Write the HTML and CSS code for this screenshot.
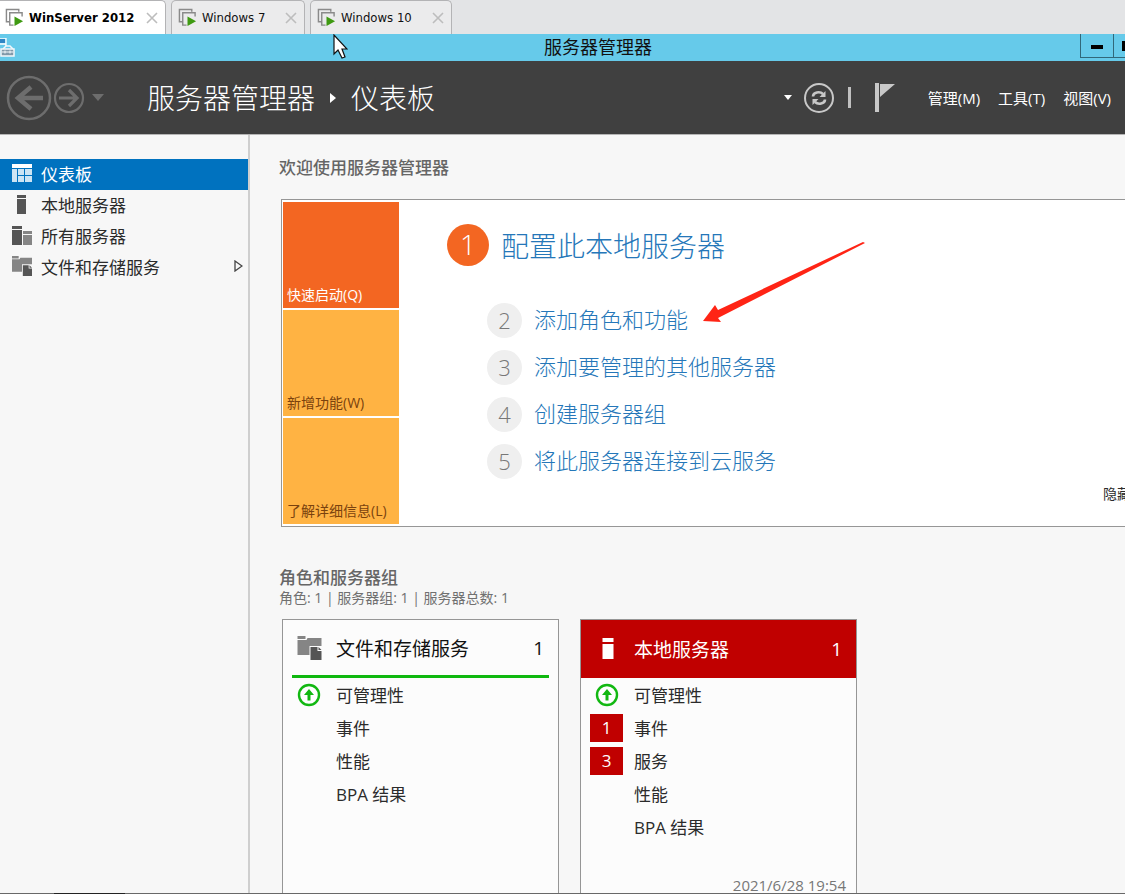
FILE: index.html
```html
<!DOCTYPE html>
<html lang="zh-CN">
<head>
<meta charset="utf-8">
<title>服务器管理器</title>
<link rel="stylesheet" href="styles.css">
</head>
<body>
<svg class="defs" aria-hidden="true">
  <symbol id="vm" viewBox="0 0 20 20">
    <path d="M5 14.500H1.500V1.500H14.500V4" fill="none" stroke="#8a8a8a" stroke-width="1.500"/>
    <path d="M9 18H5V5H18V9" fill="none" stroke="#8a8a8a" stroke-width="1.500"/>
    <path d="M10 9L19 14L10 19Z" fill="#3f9a12"/>
  </symbol>
  <symbol id="close" viewBox="0 0 12 12">
    <path d="M1 1L11 11M11 1L1 11" fill="none" stroke="#bdbdbd" stroke-width="1.600"/>
  </symbol>
  <symbol id="files" viewBox="0 0 24 24">
    <path d="M0 0H8V3H0ZM0 4H9L10 2H24V10H12V19H0Z" fill="#858585"/>
    <path d="M13 11H20V15H24V24H13Z" fill="#555"/>
    <path d="M21 11L24 14H21Z" fill="#555"/>
  </symbol>
  <symbol id="up" viewBox="0 0 24 24">
    <circle cx="12" cy="12" r="10" fill="#fff" stroke="#12b812" stroke-width="2.400"/>
    <path d="M12 6L17 12H13.500V17.500H10.500V12H7Z" fill="#12b812"/>
  </symbol>
</svg>
<div class="screen">
  <nav class="tabs" aria-label="虚拟机">
    <div class="tab tab-active"><svg class="vm"><use href="#vm"/></svg><span>WinServer 2012</span><button class="tab-close" aria-label="关闭"><svg><use href="#close"/></svg></button></div>
    <div class="tab tab-seven"><svg class="vm"><use href="#vm"/></svg><span>Windows 7</span><button class="tab-close" aria-label="关闭"><svg><use href="#close"/></svg></button></div>
    <div class="tab tab-ten"><svg class="vm"><use href="#vm"/></svg><span>Windows 10</span><button class="tab-close" aria-label="关闭"><svg><use href="#close"/></svg></button></div>
  </nav>
  <div class="window">
    <div class="titlebar">
      <svg class="app-icon" viewBox="0 0 16 20">
        <path d="M0 1H5V5H0Z" fill="#2f86c4"/><path d="M0 0H6V8M0 6H6" fill="none" stroke="#fff" stroke-width="1.300"/>
        <path d="M3 11L6 8H10L13 11" fill="none" stroke="#f4f8fb" stroke-width="1.500"/>
        <rect x="1" y="11" width="13" height="7" fill="#8199aa" stroke="#f4f8fb" stroke-width="1.500"/>
        <path d="M2 14H13M5 12.500V15.500M10 12.500V15.500" stroke="#f4f8fb"/>
      </svg>
      <h1>服务器管理器</h1>
      <div class="controls">
        <button aria-label="最小化"><svg viewBox="0 0 12 12"><path d="M0 5H12V9H0Z"/></svg></button>
        <button aria-label="最大化"><svg class="maximize" viewBox="0 0 16 12"><path d="M0 1H16V11H0ZM3 4V9H13V4Z" fill-rule="evenodd"/></svg></button>
      </div>
    </div>
    <header class="header">
      <button class="nav-button" aria-label="后退"><svg width="46" height="46" viewBox="0 0 46 46" fill="none" stroke="#6d6d6d"><circle cx="23" cy="23" r="21" stroke-width="2.500"/><path d="M37 23H12M25 12L12 23L25 34" stroke-width="4.500"/></svg></button>
      <button class="nav-button forward" aria-label="前进"><svg width="32" height="32" viewBox="0 0 32 32" fill="none" stroke="#6d6d6d"><circle cx="16" cy="16" r="14" stroke-width="2.200"/><path d="M6 16H24M16 8L24 16L16 24" stroke-width="3.200"/></svg></button>
      <svg class="history" viewBox="0 0 12 7"><path d="M0 0H12L6 7Z" fill="#6d6d6d"/></svg>
      <div class="crumbs"><span>服务器管理器</span><svg viewBox="0 0 6 10"><path d="M0 0L6 5L0 10Z" fill="#fff"/></svg><span>仪表板</span></div>
      <div class="tools">
        <svg width="8" height="5" viewBox="0 0 8 5"><path d="M0 0H8L4 5Z" fill="#fff"/></svg>
        <button class="nav-button refresh" aria-label="刷新"><svg width="32" height="32" viewBox="0 0 32 32" fill="none" stroke="#c8c8c8"><circle cx="16" cy="16" r="14" stroke-width="2"/><path d="M10 14.500C10 10 17 9 20 12M22 17.500C22 22 15 23 12 20" stroke-width="2.600"/><path d="M22.500 9V15H16.500ZM9.500 23V17H15.500Z" fill="#c8c8c8" stroke="none"/></svg></button>
        <span class="divider"></span>
        <button class="nav-button flag" aria-label="通知"><svg width="20" height="30" viewBox="0 0 20 30" fill="#c8c8c8"><path d="M0 0H4V29H0ZM5 1H20L5 14Z"/></svg></button>
        <div class="menu"><button>管理(M)</button><button>工具(T)</button><button>视图(V)</button></div>
      </div>
    </header>
    <div class="body">
      <nav class="sidebar">
        <a href="#" class="selected"><svg viewBox="0 0 20 20"><path d="M0 1H20V5H0Z" fill="#fff"/><path d="M0 6H5V19H0ZM6 6H12V12H6ZM13 6H20V12H13ZM6 13H12V19H6ZM13 13H20V19H13Z" fill="#cce4f4"/></svg><span>仪表板</span></a>
        <a href="#"><svg viewBox="0 0 20 20"><path d="M5 1H14V4H5ZM5 5H14V20H5Z" fill="#555"/></svg><span>本地服务器</span></a>
        <a href="#"><svg viewBox="0 0 20 20"><path d="M0 1H10V4H0ZM0 5H10V20H0Z" fill="#555"/><path d="M11 6H20V9H11ZM11 10H20V20H11Z" fill="#858585"/></svg><span>所有服务器</span></a>
        <a href="#"><svg viewBox="0 0 24 24"><use href="#files"/></svg><span>文件和存储服务</span><svg class="expand" viewBox="0 0 9 12"><path d="M1 1L8 6L1 11Z" fill="none" stroke="#444" stroke-width="1.300"/></svg></a>
      </nav>
      <main class="main">
        <h2>欢迎使用服务器管理器</h2>
        <section class="welcome">
          <div class="tiles"><button class="hot">快速启动(Q)</button><button>新增功能(W)</button><button>了解详细信息(L)</button></div>
          <div class="steps">
            <a href="#" class="first"><span class="number">1</span><span>配置此本地服务器</span></a>
            <div class="step-list">
              <a href="#"><span class="number">2</span><span class="label">添加角色和功能</span></a>
              <a href="#"><span class="number">3</span><span class="label">添加要管理的其他服务器</span></a>
              <a href="#"><span class="number">4</span><span class="label">创建服务器组</span></a>
              <a href="#"><span class="number">5</span><span class="label">将此服务器连接到云服务</span></a>
            </div>
          </div>
          <button class="hide">隐藏</button>
          <svg class="arrow" viewBox="0 0 162 82"><path d="M0 79L12 63L15 68L160 0L162 1L15 76L18 80Z" fill="#ff2415"/></svg>
        </section>
        <h2 class="groups-title">角色和服务器组</h2>
        <p class="summary">角色: 1 | 服务器组: 1 | 服务器总数: 1</p>
        <div class="cards">
          <article class="card">
            <div class="card-head"><svg class="card-icon"><use href="#files"/></svg><h3>文件和存储服务</h3><span>1</span></div>
            <ul><li><i><svg><use href="#up"/></svg></i>可管理性</li><li><i></i>事件</li><li><i></i>性能</li><li><i></i>BPA 结果</li></ul>
          </article>
          <article class="card alert">
            <div class="card-head"><svg class="card-icon" viewBox="0 0 24 24"><path d="M7 1H18V5H7ZM7 7H18V22H7Z" fill="#fff"/></svg><h3>本地服务器</h3><span>1</span></div>
            <ul><li><i><svg><use href="#up"/></svg></i>可管理性</li><li><i class="badge">1</i>事件</li><li><i class="badge">3</i>服务</li><li><i></i>性能</li><li><i></i>BPA 结果</li></ul>
            <time>2021/6/28 19:54</time>
          </article>
        </div>
      </main>
    </div>
  </div>
  <div class="taskbar"><span></span></div>
  <svg class="cursor" viewBox="0 0 15 26"><path d="M1 1V20L5 16L9 24L12 23L9 15H14Z" fill="#fff" stroke="#111" stroke-width="1.200"/></svg>
</div>
</body>
</html>
```
FILE: styles.css
```css
* { box-sizing: border-box; }
body { margin: 0; font-family: "Open Sans", "Noto Sans CJK SC", sans-serif; color: #2b2b2b; }
button { border: 0; padding: 0; background: none; font: inherit; color: inherit; }
a { color: inherit; text-decoration: none; }
h1, h2, h3, p, ul { margin: 0; padding: 0; }
svg { display: block; flex: none; }
.defs { position: absolute; width: 0; height: 0; }
.screen { position: relative; height: 100vh; display: flex; flex-direction: column; overflow: hidden; }

.tabs { display: flex; gap: 5px; height: 34px; flex: none; background: #e3e4e6; font: 13px/34px "DejaVu Sans Condensed", "DejaVu Sans", sans-serif; color: #111; }
.tab { display: flex; align-items: center; gap: 5px; padding: 0 7px 0 6px; border: 1px solid #b3b3b5; border-bottom: 0; border-radius: 5px 5px 0 0; background: #ebebec; white-space: nowrap; }
.tab-active { width: 166px; padding-left: 5px; border-left: 0; border-radius: 0 5px 0 0; background: #fff; color: #000; font-weight: bold; }
.tab-seven { width: 134px; }
.tab-ten { width: 142px; }
.vm { width: 19px; height: 19px; }
.tab-close { margin-left: auto; }
.tab-close svg { width: 12px; height: 12px; }

/* The window is wider than the viewport and runs off its right edge. */
.window { width: calc(100% + 71px); flex: 1; min-height: 0; display: flex; flex-direction: column; background: #f7f7f7; }
.titlebar { display: grid; grid-template-columns: 1fr auto 1fr; flex: none; height: 27px; background: #66caea; }
.titlebar h1 { font-size: 18px; line-height: 26px; font-weight: 400; color: #111; }
.app-icon { width: 16px; height: 20px; margin-top: 4px; }
.controls { display: flex; justify-content: flex-end; padding-right: 49px; }
.controls button { display: flex; align-items: center; justify-content: center; width: 34px; height: 24px; border: 1px solid #31687a; border-top: 0; }
.controls button + button { margin-left: -1px; }
.controls svg { width: 12px; height: 12px; }
.controls .maximize { width: 16px; }

.header { display: flex; align-items: center; flex: none; height: 74px; padding: 0 85px 0 6px; background: #404040; border-bottom: 1px solid #b5b5b5; color: #fff; }
.nav-button { flex: none; }
.forward { margin-left: 1px; }
.history { width: 12px; height: 7px; margin-left: 7px; }
.crumbs { display: flex; align-items: center; gap: 15px; margin-left: 43px; font-size: 28px; line-height: 40px; font-weight: 300; }
.crumbs svg { width: 6px; height: 10px; }
.tools { display: flex; align-items: center; margin-left: auto; }
.refresh { margin-left: 11px; }
.divider { width: 3px; height: 21px; margin-left: 13px; background: #c0c0c0; }
.flag { margin-left: 24px; }
.menu { display: flex; gap: 18px; margin-left: 33px; font-size: 15px; }

.body { flex: 1; min-height: 0; display: flex; }
.sidebar { flex: none; width: 250px; padding-top: 24px; border-right: 2px solid #cfcfcf; font-size: 17px; }
.sidebar a { display: flex; align-items: center; gap: 9px; height: 31px; padding: 0 5px 3px 12px; }
.sidebar a svg { width: 20px; height: 20px; }
.sidebar a .expand { width: 9px; height: 12px; margin-left: auto; }
.sidebar .selected { background: #0072bf; color: #fff; }

.main { flex: 1; min-width: 0; padding: 21px 0 0 31px; }
.main h2 { margin-left: -2px; font-size: 17px; line-height: 24px; font-weight: 500; color: #666; }
.welcome { position: relative; display: flex; margin-top: 19px; padding: 2px 1px; border: 1px solid #969696; background: #fff; }
.tiles { display: grid; gap: 2px; flex: none; width: 116px; grid-auto-rows: 106px; font-size: 14px; line-height: 20px; color: #7a420e; }
.tiles button { display: flex; align-items: flex-end; padding: 0 0 3px 4px; background: #ffb343; white-space: nowrap; }
.tiles .hot { background: #f36622; color: #fff; }
.steps { padding: 22px 0 0 48px; color: #2577b9; font-weight: 300; }
.steps a { display: flex; align-items: center; gap: 12px; height: 47px; font-size: 22px; }
.steps .first { height: 42px; font-size: 28px; }
.step-list { margin: 31px 0 0 40px; }
.label { padding-bottom: 5px; }
.number { display: flex; align-items: center; justify-content: center; width: 35px; height: 35px; padding-bottom: 2px; border-radius: 50%; background: #efefef; color: #777; }
.first .number { width: 42px; height: 42px; background: #f36622; color: #fff; }
.hide { align-self: flex-end; margin: 0 63px 20px auto; font-size: 14px; line-height: 20px; }
.arrow { position: absolute; left: 421px; top: 42px; width: 162px; height: 82px; }

.main .groups-title { margin-top: 40px; line-height: 22px; }
.summary { margin-left: -2px; font-size: 14px; line-height: 18px; color: #707070; }
.cards { display: flex; gap: 21px; margin-top: 12px; }
.card { width: 277px; height: 300px; border: 1px solid #969696; background: #fcfcfc; margin-left: 1px; }
.card + .card { margin-left: 0; }
.card-head { display: flex; align-items: center; height: 58px; margin: 0 9px; padding: 0 5px; border-bottom: 3px solid #0fb80f; color: #111; font-size: 19px; }
.card-head h3 { margin-left: 14px; font-size: 19px; font-weight: 400; }
.card-head span { margin-left: auto; }
.card-icon { width: 25px; height: 24px; }
.alert .card-head { margin: 0; padding: 0 14px; border: 0; background: #c00000; color: #fff; }
.card ul { list-style: none; padding: 0 9px; font-size: 17px; }
.card li { display: flex; align-items: center; gap: 11px; height: 33px; }
.card i { display: flex; align-items: center; justify-content: center; width: 33px; height: 28px; font-style: normal; }
.card i svg { width: 24px; height: 24px; }
.card .badge { background: #c00000; color: #fff; }
.card time { display: block; margin-top: 32px; padding-right: 10px; text-align: right; font-size: 15px; line-height: 20px; color: #777; }

.taskbar { flex: none; height: 1px; background: #686868; position: relative; }
.taskbar span { display: block; width: 71px; height: 1px; margin-left: 54px; background: #222; }
.cursor { position: absolute; left: 333px; top: 34px; width: 15px; height: 26px; }
```
